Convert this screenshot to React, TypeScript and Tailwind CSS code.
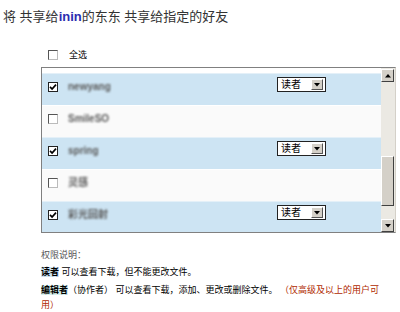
import React from "react";

const font = { fontFamily: '"Liberation Sans", "Noto Sans CJK SC", sans-serif' };

function CB({ checked }: { checked: boolean }) {
  return (
    <div className={checked ? "w-[10px] h-[10px] border border-[#222] bg-white flex items-center justify-center" : "w-[10px] h-[10px] border border-[#555] border-r-[#bbb] border-b-[#bbb] bg-white"}>
      {checked && (
        <svg width="8" height="8" viewBox="0 0 8 8">
          <path d="M1 3.8 L3.1 6 L7 1.6" stroke="#000" strokeWidth="1.7" fill="none" />
        </svg>
      )}
    </div>
  );
}

function Sel() {
  return (
    <div className="w-[49px] h-[15px] border border-[#222] bg-white flex items-center justify-between pl-[3px] pr-[2px]">
      <span className="text-[10px] leading-[10px] text-black">读者</span>
      <div className="w-[12px] h-[11px] bg-[#d4d0c8] border border-white border-r-[#555] border-b-[#555] flex items-center justify-center">
        <svg width="6" height="4" viewBox="0 0 6 4"><path d="M0 0 H6 L3 3.5 Z" fill="#000" /></svg>
      </div>
    </div>
  );
}

function ScrollBtn({ up }: { up: boolean }) {
  return (
    <div className="w-[13px] h-[13px] bg-[#d4d0c8] border border-white border-r-[#404040] border-b-[#404040] flex items-center justify-center">
      <svg width="6" height="4" viewBox="0 0 6 4">
        {up ? <path d="M0 3.5 H6 L3 0 Z" fill="#000" /> : <path d="M0 0 H6 L3 3.5 Z" fill="#000" />}
      </svg>
    </div>
  );
}

const rows = [
  { name: "newyang", checked: true },
  { name: "SmileSO", checked: false },
  { name: "spring", checked: true },
  { name: "灵感", checked: false },
  { name: "彩光回射", checked: true },
];

export default function App() {
  return (
    <div className="w-[400px] h-[312px] bg-white overflow-hidden pt-[9px]" style={font}>
      <div className="pl-[3px] text-[13px] leading-[15px] text-[#333] whitespace-nowrap">
        将 共享给<span className="text-[#2b2bb0] font-semibold">inin</span>的东东 共享给指定的好友
      </div>

      <div className="ml-[48px] mt-[26px] flex items-center h-[10px]">
        <CB checked={false} />
        <span className="ml-[11px] text-[9px] leading-[10px] text-black">全选</span>
      </div>

      <div className="ml-[41px] mt-[7px] w-[355px] h-[166px] border border-[#808080] border-r-[#d4d0c8] border-b-[#808080] flex overflow-hidden">
        <div className="flex-1 pt-[5px] bg-white overflow-hidden">
          {rows.map((r, i) => (
            <div
              key={i}
              className={r.checked ? "h-[32px] grid grid-cols-[26px_209px_49px] bg-[#cde4f3] border-t border-[#e4f0f8]" : "h-[32px] grid grid-cols-[26px_209px_49px] bg-[#fafafa] border-t border-white"}
            >
              <div className="pl-[6px] pt-[8px]"><CB checked={r.checked} /></div>
              <div className="pt-[7px] text-[10px] leading-[12px] text-[#5a5a5a] blur-[1.2px] font-bold">{r.name}</div>
              <div className="pt-[3px]">{r.checked && <Sel />}</div>
            </div>
          ))}
        </div>
        <div className="w-[14px] bg-[#ebe9e3] flex flex-col pt-[1px]">
          <ScrollBtn up />
          <div className="mt-[74px] w-[13px] h-[50px] bg-[#d4d0c8] border border-white border-r-[#404040] border-b-[#404040]" />
          <div className="flex-1" />
          <ScrollBtn up={false} />
        </div>
      </div>

      <div className="ml-[41px] mt-[16px] text-[9px] leading-[12px]">
        <div className="text-[#555]">权限说明：</div>
        <div className="mt-[5px] text-black whitespace-nowrap">
          <span className="font-bold bg-[#cde4f3]">读者</span> 可以查看下载，但不能更改文件。
        </div>
        <div className="mt-[5px] text-black leading-[15px] whitespace-nowrap">
          <span className="font-bold bg-[#d6efec]">编辑者</span>（协作者） 可以查看下载，添加、更改或删除文件。 <span className="text-[#b02a00]">（仅高级及以上的用户可<br />用）</span>
        </div>
      </div>
    </div>
  );
}
